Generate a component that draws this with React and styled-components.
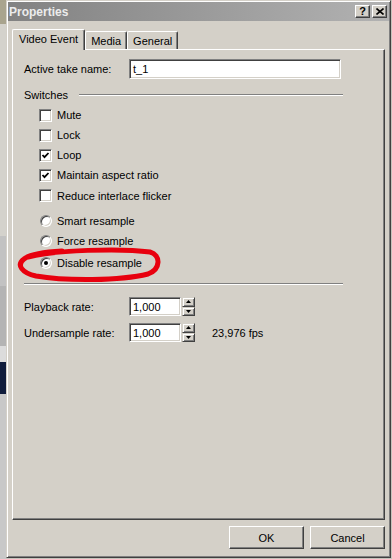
import React from 'react';
import styled, {createGlobalStyle} from 'styled-components';

const GlobalStyle = createGlobalStyle`
    html, body {
        margin: 0;
        padding: 0;
        background: #c6c3bc;
    }
    body {
        font-family: "Liberation Sans", Arial, sans-serif;
        font-size: 11px;
        color: #000;
    }
`;

const Screen = styled.div`
    display: flex;
    width: 392px;
    height: 559px;
    overflow: hidden;
`;

const Behind = styled.div`
    width: 6px;
    flex-shrink: 0;
    display: flex;
    flex-direction: column;
`;

const Strip = styled.div`
    height: ${p => p.$h}px;
    background: ${p => p.$bg};
    flex-shrink: 0;
`;

const Dialog = styled.div`
    width: 385px;
    height: 558px;
    box-sizing: border-box;
    flex-shrink: 0;
    display: flex;
    flex-direction: column;
    background: #d4d0c8;
    border: 1px solid;
    border-color: #d4d0c8 #404040 #404040 #d4d0c8;
    box-shadow: inset 1px 1px #fff, inset -1px -1px #808080;
    padding: 1px;
`;

const TitleBar = styled.div`
    height: 19px;
    display: flex;
    align-items: center;
    padding: 0 2px 0 1px;
    background: linear-gradient(90deg, #828282, #b2b2b2);
`;

const Title = styled.div`
    flex: 1;
    color: #ececec;
    font-weight: bold;
    font-size: 12px;
`;

const TitleButton = styled.div`
    width: 15px;
    height: 13px;
    box-sizing: border-box;
    margin-left: 2px;
    display: flex;
    align-items: center;
    justify-content: center;
    background: #d4d0c8;
    border: 1px solid;
    border-color: #fff #404040 #404040 #fff;
    box-shadow: inset -1px -1px #808080;
    font-weight: bold;
    font-size: 11px;
    line-height: 1;
`;

const Body = styled.div`
    flex: 1;
    display: flex;
    flex-direction: column;
    padding: 8px 4px 0 4px;
`;

const TabStrip = styled.div`
    height: 20px;
    display: flex;
    align-items: flex-end;
`;

const Tab = styled.div`
    position: relative;
    z-index: ${p => p.$active ? 1 : 0};
    height: ${p => p.$active ? 21 : 18}px;
    margin-bottom: ${p => p.$active ? -1 : 0}px;
    box-sizing: border-box;
    display: flex;
    align-items: center;
    padding: ${p => p.$active ? '0 6px 2px 6px' : '0 5px'};
    background: #d4d0c8;
    border-top: 1px solid #fff;
    border-left: 1px solid #fff;
    border-right: 1px solid #404040;
    box-shadow: inset -1px 0 #808080;
    border-radius: 2px 2px 0 0;
`;

const Panel = styled.div`
    position: relative;
    height: 471px;
    box-sizing: border-box;
    display: flex;
    flex-direction: column;
    border: 1px solid;
    border-color: #fff #404040 #404040 #fff;
    box-shadow: inset -1px -1px #808080;
    padding: 9px 41px 0 11px;
`;

const Row = styled.div`
    display: flex;
    align-items: center;
    height: ${p => p.$h || 20}px;
    margin-top: ${p => p.$gap || 0}px;
    padding-left: ${p => p.$indent || 0}px;
    white-space: nowrap;
`;

const Label = styled.div`
    width: 105px;
    flex-shrink: 0;
`;

const TextBox = styled.div`
    width: ${p => p.$w}px;
    height: ${p => p.$h || 20}px;
    box-sizing: border-box;
    display: flex;
    align-items: center;
    padding-left: 3px;
    background: #fff;
    border: 1px solid;
    border-color: #808080 #fff #fff #808080;
    box-shadow: inset 1px 1px #404040, inset -1px -1px #d4d0c8;
`;

const GroupLine = styled.div`
    flex: 1;
    margin-left: 11px;
    border-top: 1px solid #808080;
    border-bottom: 1px solid #fff;
`;

const Separator = styled.div`
    margin-top: ${p => p.$gap}px;
    border-top: 1px solid #808080;
    border-bottom: 1px solid #fff;
`;

const CheckBox = styled.div`
    width: 13px;
    height: 13px;
    box-sizing: border-box;
    flex-shrink: 0;
    margin-right: 5px;
    display: flex;
    align-items: center;
    justify-content: center;
    background: #fff;
    border: 1px solid;
    border-color: #808080 #fff #fff #808080;
    box-shadow: inset 1px 1px #404040, inset -1px -1px #d4d0c8;
`;

const Radio = styled.div`
    width: 12px;
    height: 12px;
    box-sizing: border-box;
    flex-shrink: 0;
    margin: 0 5px 0 1px;
    display: flex;
    align-items: center;
    justify-content: center;
    border-radius: 50%;
    background: #fff;
    border: 1px solid;
    border-color: #808080 #fff #fff #808080;
    box-shadow: inset 1px 1px #404040, inset -1px -1px #d4d0c8;
`;

const Dot = styled.div`
    width: 4px;
    height: 4px;
    border-radius: 50%;
    background: #000;
`;

const Spinner = styled.div`
    width: 13px;
    height: 19px;
    margin-left: 1px;
    display: flex;
    flex-direction: column;
`;

const SpinButton = styled.div`
    flex: 1;
    box-sizing: border-box;
    display: flex;
    align-items: center;
    justify-content: center;
    background: #d4d0c8;
    border: 1px solid;
    border-color: #d4d0c8 #404040 #404040 #d4d0c8;
    box-shadow: inset 1px 1px #fff, inset -1px -1px #808080;
`;

const Fps = styled.div`
    margin-left: 17px;
`;

const Footer = styled.div`
    display: flex;
    justify-content: flex-end;
    gap: 6px;
    margin-top: 6px;
`;

const Button = styled.div`
    width: 75px;
    height: 23px;
    box-sizing: border-box;
    display: flex;
    align-items: center;
    justify-content: center;
    background: #d4d0c8;
    border: 1px solid;
    border-color: #fff #404040 #404040 #fff;
    box-shadow: inset -1px -1px #808080;
`;

const Scribble = styled.svg`
    position: absolute;
    left: 0;
    top: 0;
    pointer-events: none;
`;

const Check = () => (
    <svg width="9" height="9" viewBox="0 0 9 9">
        <polyline points="1.5,4 3.5,6.2 7.5,2" fill="none" stroke="#000" strokeWidth="1.8" />
    </svg>
);

const Arrow = ({up}) => (
    <svg width="5" height="3" viewBox="0 0 5 3">
        <polygon points={up ? '2.5,0 5,3 0,3' : '0,0 5,0 2.5,3'} fill="#000" />
    </svg>
);

const switches = [
    {label: 'Mute', checked: false},
    {label: 'Lock', checked: false},
    {label: 'Loop', checked: true},
    {label: 'Maintain aspect ratio', checked: true},
    {label: 'Reduce interlace flicker', checked: false, h: 21},
];

const resamples = [
    {label: 'Smart resample', gap: 5},
    {label: 'Force resample'},
    {label: 'Disable resample', selected: true, h: 21, gap: 1},
];

const behind = [
    [24, '#a9a48e'], [212, '#d4d2cc'], [50, '#c2c2c2'], [60, '#b4b4b4'],
    [16, '#dcdcdc'], [32, '#101c3c'], [165, '#c8c8c8'],
];

export default function App() {
    return (
        <Screen>
            <GlobalStyle />
            <Behind>
                {behind.map(([h, bg], i) => <Strip key={i} $h={h} $bg={bg} />)}
            </Behind>
            <Dialog>
                <TitleBar>
                    <Title>Properties</Title>
                    <TitleButton>?</TitleButton>
                    <TitleButton>
                        <svg width="8" height="7" viewBox="0 0 8 7">
                            <path d="M0.5 0.5 L7.5 6.5 M7.5 0.5 L0.5 6.5" stroke="#000" strokeWidth="1.6" />
                        </svg>
                    </TitleButton>
                </TitleBar>
                <Body>
                    <TabStrip>
                        <Tab $active>Video Event</Tab>
                        <Tab>Media</Tab>
                        <Tab>General</Tab>
                    </TabStrip>
                    <Panel>
                        <Row>
                            <Label>Active take name:</Label>
                            <TextBox $w={212}>t_1</TextBox>
                        </Row>
                        <Row $h={14} $gap={9}>
                            Switches
                            <GroupLine />
                        </Row>
                        {switches.map((s, i) => (
                            <Row key={s.label} $indent={15} $h={s.h} $gap={i === 0 ? 3 : 0}>
                                <CheckBox>{s.checked && <Check />}</CheckBox>
                                {s.label}
                            </Row>
                        ))}
                        {resamples.map(r => (
                            <Row key={r.label} $indent={15} $h={r.h} $gap={r.gap}>
                                <Radio>{r.selected && <Dot />}</Radio>
                                {r.label}
                            </Row>
                        ))}
                        <Separator $gap={10} />
                        <Row $h={19} $gap={12}>
                            <Label>Playback rate:</Label>
                            <TextBox $w={52} $h={19}>1,000</TextBox>
                            <Spinner>
                                <SpinButton><Arrow up /></SpinButton>
                                <SpinButton><Arrow /></SpinButton>
                            </Spinner>
                        </Row>
                        <Row $h={19} $gap={7}>
                            <Label>Undersample rate:</Label>
                            <TextBox $w={52} $h={19}>1,000</TextBox>
                            <Spinner>
                                <SpinButton><Arrow up /></SpinButton>
                                <SpinButton><Arrow /></SpinButton>
                            </Spinner>
                            <Fps>23,976 fps</Fps>
                        </Row>
                        <Scribble width="200" height="300" viewBox="13 50 200 300">
                            <path
                                d="M28 257 C55 250, 120 248, 150 252 C161 255, 161 269, 148 274 C120 281, 65 281, 36 276 C22 273, 16 265, 24 259 C30 254, 45 252, 62 251"
                                fill="none"
                                stroke="#e8000e"
                                strokeWidth="5"
                                strokeLinecap="round"
                            />
                        </Scribble>
                    </Panel>
                    <Footer>
                        <Button>OK</Button>
                        <Button>Cancel</Button>
                    </Footer>
                </Body>
            </Dialog>
        </Screen>
    );
}
